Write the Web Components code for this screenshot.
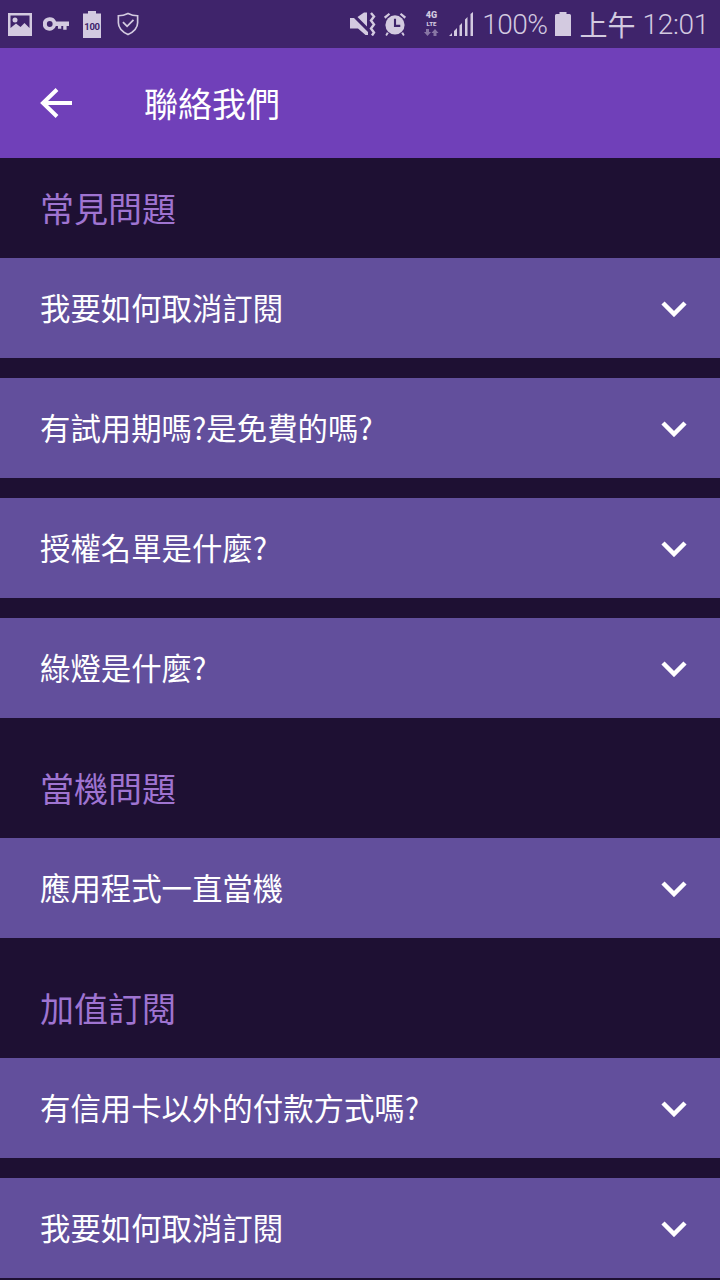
<!DOCTYPE html>
<html>
<head>
<meta charset="utf-8">
<style>
    html, body {
        margin: 0;
        background: #1e1033;
        font-family: "Noto Sans CJK TC", Roboto, sans-serif;
    }
</style>
</head>
<body>
<contact-page>
    <status-bar></status-bar>
    <app-bar>聯絡我們</app-bar>
    <faq-section first>常見問題</faq-section>
    <faq-row>我要如何取消訂閱</faq-row>
    <faq-row gap>有試用期嗎?是免費的嗎?</faq-row>
    <faq-row gap>授權名單是什麼?</faq-row>
    <faq-row gap>綠燈是什麼?</faq-row>
    <faq-section>當機問題</faq-section>
    <faq-row>應用程式一直當機</faq-row>
    <faq-section>加值訂閱</faq-section>
    <faq-row>有信用卡以外的付款方式嗎?</faq-row>
    <faq-row gap>我要如何取消訂閱</faq-row>
</contact-page>
<script>
//contactPage.js
class ContactPage extends HTMLElement {
    constructor(){
        super();
        this.attachShadow({mode: 'open'});
        this.shadowRoot.innerHTML = `
        <style>
            :host {
                display: flex;
                flex-direction: column;
                width: 720px;
                height: 1280px;
                overflow: hidden;
                background: #1e1033;
            }
        </style>
        <slot></slot>`;
    }
}

class StatusBar extends HTMLElement {
    constructor(){
        super();
        this.attachShadow({mode: 'open'});
        this.shadowRoot.innerHTML = `
        <style>
            :host {
                display: flex;
                align-items: center;
                height: 48px;
                background: #3f246b;
                color: #d3cae0;
            }
            svg {
                display: block;
                flex: none;
                fill: #d3cae0;
            }
            .left, .right {
                display: flex;
                align-items: center;
            }
            .right {
                margin-left: auto;
            }
            .pct {
                font: 300 28px Roboto, sans-serif;
                letter-spacing: -.5px;
                margin-left: 9px;
            }
            .ampm {
                font: 28px "Noto Sans CJK TC", sans-serif;
                margin-left: 8px;
            }
            .time {
                font: 300 28px Roboto, sans-serif;
                letter-spacing: -.3px;
                margin-left: 7px;
                margin-right: 11px;
            }
        </style>
        <div class="left">
            <svg style="margin-left:8px" width="24" height="23" viewBox="0 0 24 23">
                <path fill-rule="evenodd" d="M0 0h24v23H0z M2.500 2.500v12.500l5.500-4.500 4.500 3.500 4-4 5 5V2.500z"/>
                <circle cx="7" cy="7" r="2.500"/>
            </svg>
            <svg style="margin-left:11px" width="26" height="14" viewBox="0 0 27 14">
                <path fill-rule="evenodd" d="M7 0a7 7 0 0 1 6.600 4.500H27v4.500h-2.500v4h-3.500v-4h-2v3h-3.500v-3h-2.100A7 7 0 1 1 7 0z M7 4a3 3 0 1 0 0 6 3 3 0 0 0 0-6z"/>
            </svg>
            <svg style="margin-left:14px" width="18" height="27" viewBox="0 0 18 27">
                <path d="M5 0h8v2.500h5V27H0V2.500h5z"/>
                <text x="9" y="19" text-anchor="middle" font-family="Roboto" font-weight="700" font-size="9.500" letter-spacing="-.3" style="fill:#3f246b">100</text>
            </svg>
            <svg style="margin-left:16px" width="22" height="24" viewBox="0 0 24 25">
                <path fill="none" stroke="#d3cae0" stroke-width="1.800" d="M1.500 3.500C6 3.500 9 2.500 12 1c3 1.500 6 2.500 10.500 2.500v7.500c0 6-4.500 10-10.500 13C6 21 1.500 17 1.500 11z"/>
                <path fill="none" stroke="#d3cae0" stroke-width="2" d="M6.500 10.500l4.500 4.500 7-7"/>
            </svg>
        </div>
        <div class="right">
            <svg width="26" height="24" viewBox="0 0 26 24">
                <path d="M0 6h4l14 14v3h-2.500l-7.500-6.500H0z M7.500 5L14 .5h3V14.500z"/>
                <path fill="none" stroke="#d3cae0" stroke-width="2.400" d="M21 1l3 3.500-3 4 3 4-3 4 3 4-2 3"/>
            </svg>
            <svg style="margin-left:7px" width="24" height="24" viewBox="0 0 25 25">
                <circle cx="12.500" cy="13.500" r="10"/>
                <path d="M1 5l5-4 1.500 1.500-5 4.500z M24 5l-5-4-1.500 1.500 5 4.500z M4 21l2 1-2 3-1.500-1z M21 21l-2 1 2 3 1.500-1z"/>
                <path fill="none" stroke="#3f246b" stroke-width="2.200" d="M12.500 7v7.500h5.500"/>
            </svg>
            <svg style="margin-left:16px" width="17" height="33" viewBox="0 -4 17 33">
                <text x="8.500" y="6" text-anchor="middle" font-family="Roboto" font-weight="900" font-size="9">4G</text>
                <text x="8.500" y="13.800" text-anchor="middle" font-family="Roboto" font-weight="900" font-size="6">LTE</text>
                <path opacity=".5" d="M3 17h3v3h2l-3.500 4L1 20h2z M12 17l3.500 4h-2v3h-3v-3h-2z"/>
            </svg>
            <svg style="margin-left:9px" width="24" height="24" viewBox="0 0 24 24">
                <path d="M0 24l3-3v3z M5 19l3-3v8H5z M10.500 13.500l2.500-2.500v13h-2.500z M16 7.500l2.500-2.500v19H16z M21.500 2L24 0v24h-2.500z"/>
            </svg>
            <span class="pct">100%</span>
            <svg style="margin-left:8px" width="16" height="24" viewBox="0 0 16 24">
                <path d="M4.500 0h7v2h3a1.500 1.500 0 0 1 1.500 1.500V24H0V3.500A1.500 1.500 0 0 1 1.500 2h3z"/>
            </svg>
            <span class="ampm">上午</span>
            <span class="time">12:01</span>
        </div>`;
    }
}

class AppBar extends HTMLElement {
    constructor(){
        super();
        this.attachShadow({mode: 'open'});
        this.shadowRoot.innerHTML = `
        <style>
            :host {
                display: flex;
                align-items: center;
                height: 110px;
                background: #7040b9;
                color: #ffffff;
                font-size: 34px;
            }
            svg {
                display: block;
                margin-left: 40px;
                fill: none;
                stroke: #ffffff;
                stroke-width: 4;
            }
            .title {
                margin-left: 72px;
                margin-top: -2px;
            }
        </style>
        <svg width="32" height="32" viewBox="0 0 32 32">
            <path d="M32 16H3 M17 2.500L3 16l14 13.500"/>
        </svg>
        <div class="title"><slot></slot></div>`;
    }
}

class FaqSection extends HTMLElement {
    constructor(){
        super();
        this.attachShadow({mode: 'open'});
        this.shadowRoot.innerHTML = `
        <style>
            :host {
                display: flex;
                align-items: center;
                box-sizing: border-box;
                height: 120px;
                padding: 18px 0 0 40px;
                color: #9f74d1;
                font-size: 34px;
            }
            :host([first]) {
                height: 100px;
                padding-top: 0;
                padding-bottom: 2px;
            }
        </style>
        <slot></slot>`;
    }
}

class FaqRow extends HTMLElement {
    constructor(){
        super();
        this.attachShadow({mode: 'open'});
        this.shadowRoot.innerHTML = `
        <style>
            :host {
                display: block;
                flex: none;
            }
            :host([gap]) {
                margin-top: 20px;
            }
            .row {
                display: flex;
                align-items: center;
                box-sizing: border-box;
                height: 100px;
                padding: 0 33px 0 40px;
                background: #624f9c;
                color: #ffffff;
                font-size: 30.400px;
            }
            .label {
                margin-top: -2px;
            }
            svg {
                display: block;
                margin-left: auto;
                fill: none;
                stroke: #ffffff;
                stroke-width: 4.500;
            }
        </style>
        <div class="row">
            <div class="label"><slot></slot></div>
            <svg width="26" height="18" viewBox="0 0 26 18">
                <path d="M2 4l11 11L24 4"/>
            </svg>
        </div>`;
    }
}

customElements.define('contact-page', ContactPage);
customElements.define('status-bar', StatusBar);
customElements.define('app-bar', AppBar);
customElements.define('faq-section', FaqSection);
customElements.define('faq-row', FaqRow);
</script>
</body>
</html>
